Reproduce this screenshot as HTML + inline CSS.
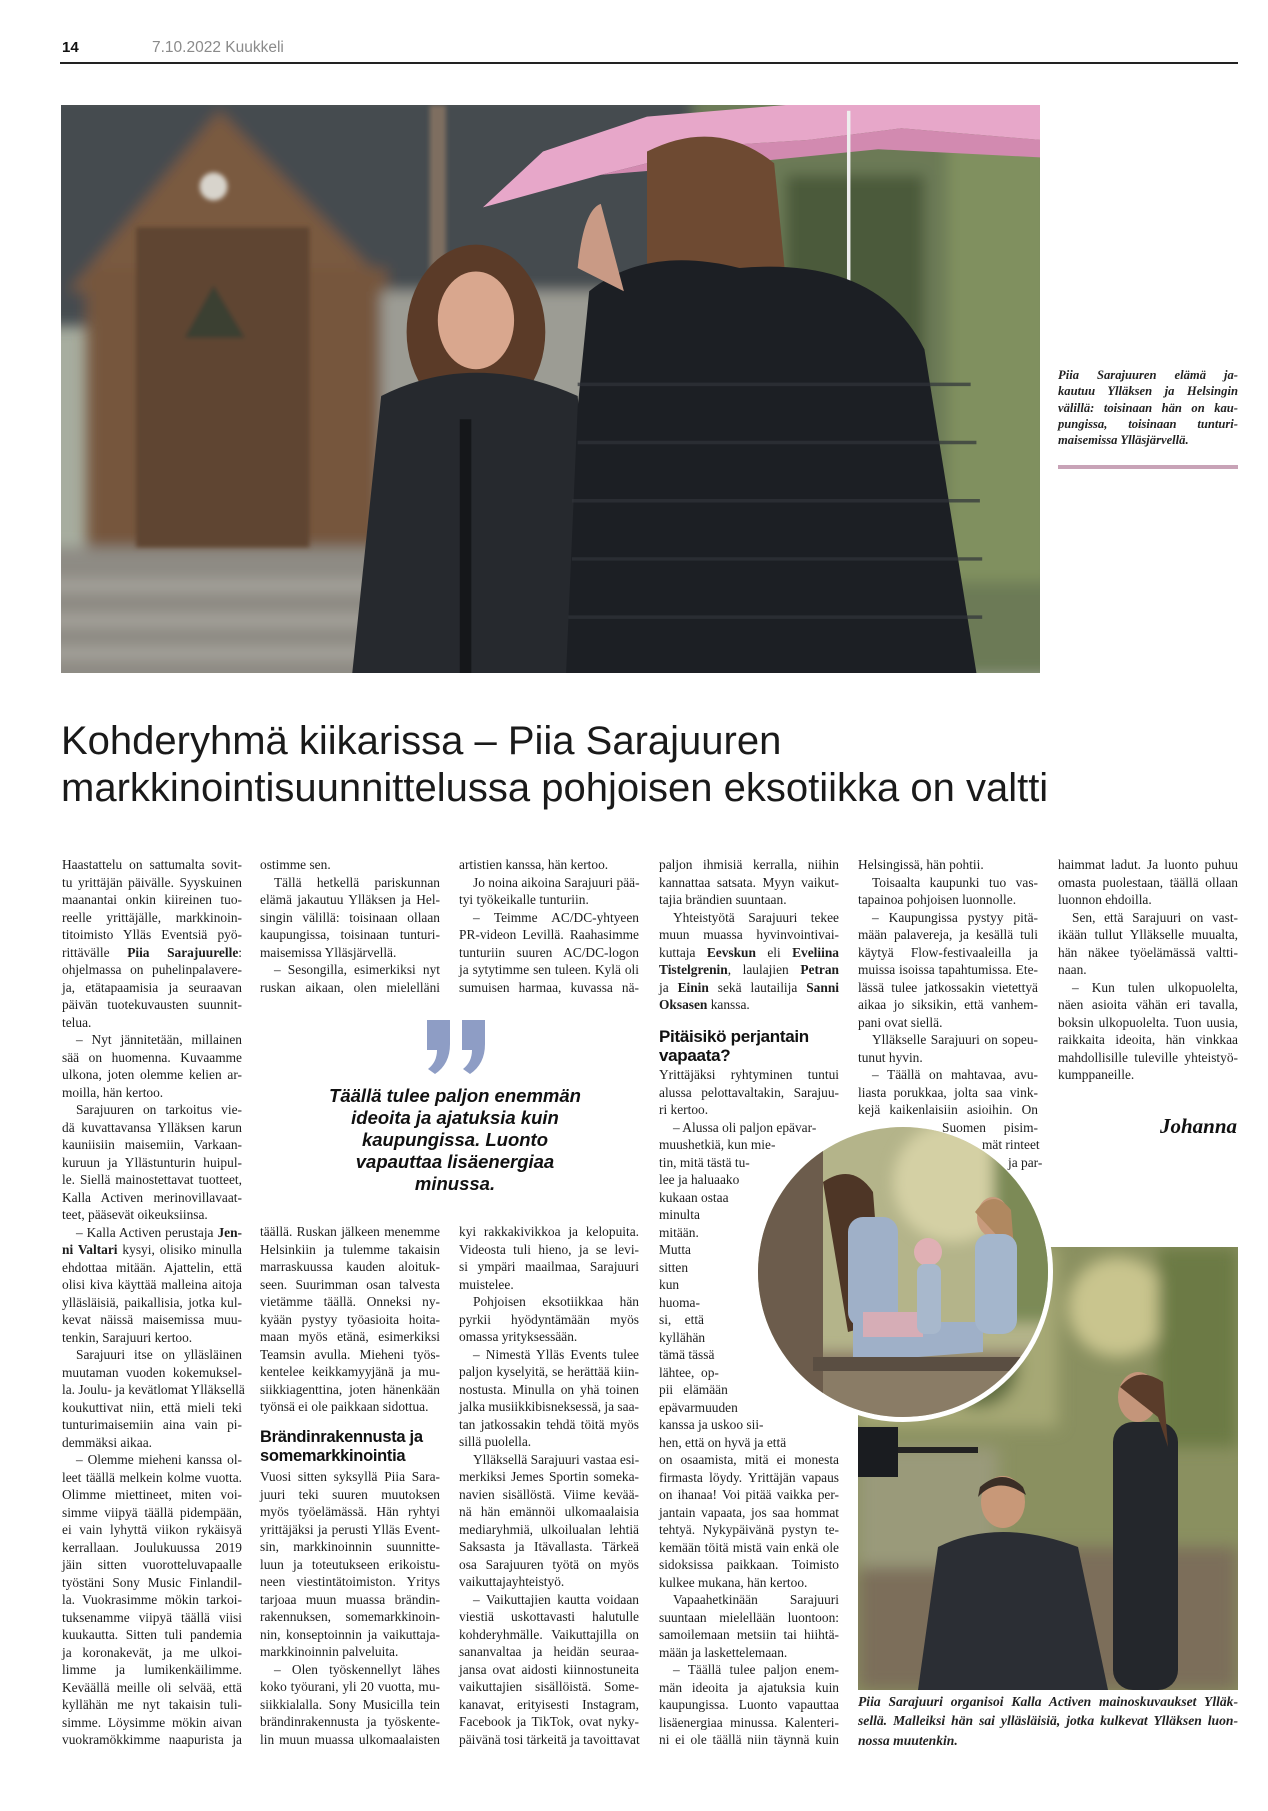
<!DOCTYPE html>
<html><head><meta charset="utf-8">
<style>
*{margin:0;padding:0;box-sizing:border-box}
body{width:1268px;height:1811px;background:#fff;position:relative;overflow:hidden;font-family:"Liberation Serif",serif;color:#1d1d1d}
.abs{position:absolute}
.col{position:absolute;width:180px;font-size:13.4px;line-height:17.5px}
.col div{text-align:justify;text-align-last:justify;white-space:nowrap;overflow:visible}
.col div.e{text-align-last:left}
.col div.i{padding-left:14px}
.col div.l{text-align-last:left}
.sh{font-family:"Liberation Sans",sans-serif;font-weight:bold;font-size:16.5px;line-height:19px;color:#111;white-space:nowrap;letter-spacing:-0.3px}
.cap{font-style:italic;font-weight:bold;color:#222}
.cap div{text-align:justify;text-align-last:justify;white-space:nowrap}
.cap div.e{text-align-last:left}
</style></head><body>

<div class="abs" style="left:62px;top:39px;font-family:'Liberation Sans',sans-serif;font-size:15px;font-weight:bold;color:#111">14</div>
<div class="abs" style="left:152px;top:39px;font-family:'Liberation Sans',sans-serif;font-size:15.5px;color:#8a8a8a">7.10.2022 Kuukkeli</div>
<div class="abs" style="left:60px;top:62px;width:1178px;height:1.5px;background:#222"></div>

<!-- main photo -->
<svg class="abs" style="left:61px;top:105px" width="979" height="568" viewBox="53 90 847 488" preserveAspectRatio="none">
<defs><filter id="b1"><feGaussianBlur stdDeviation="6"/></filter><filter id="b2"><feGaussianBlur stdDeviation="2"/></filter></defs>
<rect x="53" y="90" width="847" height="488" fill="#a7ad9f"/>
<g filter="url(#b1)">
<rect x="40" y="80" width="560" height="200" fill="#454b50"/>
<rect x="600" y="80" width="320" height="500" fill="#6c7a56"/>
<rect x="680" y="150" width="120" height="300" fill="#4c5a3a"/>
<rect x="820" y="120" width="90" height="380" fill="#80905e"/>
<polygon points="190,95 60,250 340,250" fill="#7a5a40"/>
<rect x="75" y="230" width="260" height="250" fill="#76573e"/>
<rect x="330" y="250" width="240" height="230" fill="#9c9c94"/>
<rect x="40" y="470" width="620" height="120" fill="#8e8b84"/>
<rect x="40" y="500" width="400" height="6" fill="#b3b0a8"/>
<rect x="40" y="530" width="400" height="6" fill="#b3b0a8"/>
<rect x="40" y="558" width="400" height="6" fill="#b3b0a8"/>
</g>
<g filter="url(#b2)">
<rect x="118" y="195" width="150" height="275" fill="#5f4430"/>
<polygon points="185,245 160,290 212,290" fill="#3a3f33"/>
<circle cx="185" cy="160" r="12" fill="#d8d4cc"/>
<rect x="372" y="90" width="14" height="490" fill="#7e6e60"/>
</g>
<polygon points="418,178 470,130 560,100 680,90 900,90 900,120 780,110 700,120 620,125 520,150" fill="#e7a7c9"/>
<polygon points="520,150 620,125 700,120 780,110 900,120 900,135 760,128 640,140" fill="#d28ab0"/>
<rect x="733" y="95" width="3" height="150" fill="#eee"/>
<ellipse cx="412" cy="285" rx="60" ry="75" fill="#5b3b28"/>
<ellipse cx="412" cy="275" rx="33" ry="42" fill="#d9a78e"/>
<path d="M330,340 Q410,300 500,340 L520,578 L305,578 Z" fill="#26292e"/>
<rect x="398" y="360" width="10" height="218" fill="#15171a"/>
<path d="M560,130 Q620,100 670,140 L690,340 L560,340 Z" fill="#6e4a32"/>
<path d="M510,250 Q560,210 640,230 Q760,220 800,300 L845,578 L490,578 L500,350 Z" fill="#1c1f24"/>
<path d="M500,230 Q505,180 520,175 L540,250 Z" fill="#c99a85"/>
<g stroke="#30343a" stroke-width="3" opacity=".7"><line x1="500" y1="330" x2="840" y2="330"/><line x1="500" y1="380" x2="845" y2="380"/><line x1="495" y1="430" x2="848" y2="430"/><line x1="495" y1="480" x2="850" y2="480"/><line x1="492" y1="530" x2="850" y2="530"/></g>
</svg>

<div class="abs cap" style="left:1058px;top:367px;width:180px;font-size:12.6px;line-height:16.3px">
<div>Piia Sarajuuren elämä ja-</div><div>kautuu Ylläksen ja Helsingin</div><div>välillä: toisinaan hän on kau-</div><div>pungissa, toisinaan tunturi-</div><div class="e">maisemissa Ylläsjärvellä.</div>
</div>
<div class="abs" style="left:1058px;top:465px;width:180px;height:4px;background:#c8a3b7"></div>

<div class="abs" style="left:61px;top:718px;font-family:'Liberation Sans',sans-serif;font-size:40px;line-height:47px;color:#1a1a1a;white-space:nowrap">Kohderyhmä kiikarissa – Piia Sarajuuren<br>markkinointisuunnittelussa pohjoisen eksotiikka on valtti</div>

<!-- rect photo -->
<svg class="abs" style="left:858px;top:1247px" width="380" height="443" viewBox="0 0 380 443">
<defs><filter id="b3"><feGaussianBlur stdDeviation="8"/></filter></defs>
<rect width="380" height="443" fill="#8a9060"/>
<g filter="url(#b3)">
<rect x="0" y="0" width="200" height="180" fill="#a6a874"/>
<circle cx="260" cy="60" r="50" fill="#c9c58e"/>
<circle cx="120" cy="120" r="40" fill="#5c6a3c"/>
<rect x="300" y="0" width="80" height="200" fill="#6c7a44"/>
<rect x="0" y="300" width="380" height="143" fill="#7b6e5a"/>
<rect x="0" y="200" width="140" height="120" fill="#9a9a7a"/>
</g>
<ellipse cx="145" cy="255" rx="22" ry="26" fill="#c89878"/>
<path d="M120,250 Q140,228 168,248 L165,240 Q145,220 122,240 Z" fill="#3a2e26"/>
<path d="M80,300 Q140,270 220,300 L250,443 L60,443 Z" fill="#2b2e34"/>
<rect x="0" y="180" width="40" height="50" fill="#1a1c20"/>
<rect x="40" y="200" width="80" height="6" fill="#222"/>
<rect x="255" y="175" width="65" height="268" rx="20" fill="#24272c"/>
<ellipse cx="280" cy="150" rx="20" ry="25" fill="#c4957a"/>
<path d="M262,140 Q280,118 305,135 L310,200 L300,170 Z" fill="#5a3c2a"/>
</svg>
<div class="abs cap" style="left:858px;top:1692px;width:380px;font-size:13.6px;line-height:19.3px">
<div>Piia Sarajuuri organisoi Kalla Activen mainoskuvaukset Ylläk-</div>
<div>sellä. Malleiksi hän sai ylläsläisiä, jotka kulkevat Ylläksen luon-</div>
<div class="e">nossa muutenkin.</div>
</div>

<!-- circle photo -->
<svg class="abs" style="left:753px;top:1122px" width="300" height="300" viewBox="0 0 300 300">
<defs><clipPath id="c"><circle cx="150" cy="150" r="145"/></clipPath><filter id="b4"><feGaussianBlur stdDeviation="7"/></filter></defs>
<circle cx="150" cy="150" r="150" fill="#fff"/>
<g clip-path="url(#c)">
<rect width="300" height="300" fill="#b4b48a"/>
<g filter="url(#b4)">
<circle cx="200" cy="60" r="60" fill="#d4d0a4"/>
<rect x="240" y="0" width="70" height="200" fill="#7c8a56"/>
<rect x="0" y="230" width="306" height="80" fill="#8a7c66"/>
</g>
<rect x="0" y="0" width="70" height="306" fill="#6c5c4c"/>
<path d="M70,60 Q100,40 120,70 L130,200 L95,210 Z" fill="#4e3626"/>
<rect x="95" y="95" width="50" height="110" rx="15" fill="#9fb0c8"/>
<path d="M100,200 L230,200 L230,230 L100,240 Z" fill="#9fb0c8"/>
<path d="M110,190 L170,190 L170,215 L110,215 Z" fill="#d6adb6"/>
<rect x="60" y="235" width="220" height="14" fill="#5a4e42"/>
<circle cx="175" cy="130" r="14" fill="#e0b0b4"/>
<rect x="164" y="142" width="24" height="70" rx="8" fill="#a8b8cc"/>
<ellipse cx="240" cy="95" rx="16" ry="20" fill="#c89a7c"/>
<path d="M222,90 Q240,65 258,88 L262,140 L250,120 Z" fill="#b08860"/>
<rect x="222" y="112" width="42" height="100" rx="14" fill="#a4b6cc"/>
</g>
</svg>

<!-- col1 -->
<div class="col" style="left:62px;top:856px">
<div>Haastattelu on sattumalta sovit-</div>
<div>tu yrittäjän päivälle. Syyskuinen</div>
<div>maanantai onkin kiireinen tuo-</div>
<div>reelle yrittäjälle, markkinoin-</div>
<div>titoimisto Ylläs Eventsiä pyö-</div>
<div>rittävälle <b>Piia Sarajuurelle</b>:</div>
<div>ohjelmassa on puhelinpalavere-</div>
<div>ja, etätapaamisia ja seuraavan</div>
<div>päivän tuotekuvausten suunnit-</div>
<div class="e">telua.</div>
<div class="i">– Nyt jännitetään, millainen</div>
<div>sää on huomenna. Kuvaamme</div>
<div>ulkona, joten olemme kelien ar-</div>
<div class="e">moilla, hän kertoo.</div>
<div class="i">Sarajuuren on tarkoitus vie-</div>
<div>dä kuvattavansa Ylläksen karun</div>
<div>kauniisiin maisemiin, Varkaan-</div>
<div>kuruun ja Yllästunturin huipul-</div>
<div>le. Siellä mainostettavat tuotteet,</div>
<div>Kalla Activen merinovillavaat-</div>
<div class="e">teet, pääsevät oikeuksiinsa.</div>
<div class="i">– Kalla Activen perustaja <b>Jen-</b></div>
<div><b>ni Valtari</b> kysyi, olisiko minulla</div>
<div>ehdottaa mitään. Ajattelin, että</div>
<div>olisi kiva käyttää malleina aitoja</div>
<div>ylläsläisiä, paikallisia, jotka kul-</div>
<div>kevat näissä maisemissa muu-</div>
<div class="e">tenkin, Sarajuuri kertoo.</div>
<div class="i">Sarajuuri itse on ylläsläinen</div>
<div>muutaman vuoden kokemuksel-</div>
<div>la. Joulu- ja kevätlomat Ylläksellä</div>
<div>koukuttivat niin, että mieli teki</div>
<div>tunturimaisemiin aina vain pi-</div>
<div class="e">demmäksi aikaa.</div>
<div class="i">– Olemme mieheni kanssa ol-</div>
<div>leet täällä melkein kolme vuotta.</div>
<div>Olimme miettineet, miten voi-</div>
<div>simme viipyä täällä pidempään,</div>
<div>ei vain lyhyttä viikon rykäisyä</div>
<div>kerrallaan. Joulukuussa 2019</div>
<div>jäin sitten vuorotteluvapaalle</div>
<div>työstäni Sony Music Finlandil-</div>
<div>la. Vuokrasimme mökin tarkoi-</div>
<div>tuksenamme viipyä täällä viisi</div>
<div>kuukautta. Sitten tuli pandemia</div>
<div>ja koronakevät, ja me ulkoi-</div>
<div>limme ja lumikenkäilimme.</div>
<div>Keväällä meille oli selvää, että</div>
<div>kyllähän me nyt takaisin tuli-</div>
<div>simme. Löysimme mökin aivan</div>
<div>vuokramökkimme naapurista ja</div>
</div>

<!-- col2 -->
<div class="col" style="left:260px;top:856px">
<div class="e">ostimme sen.</div>
<div class="i">Tällä hetkellä pariskunnan</div>
<div>elämä jakautuu Ylläksen ja Hel-</div>
<div>singin välillä: toisinaan ollaan</div>
<div>kaupungissa, toisinaan tunturi-</div>
<div class="e">maisemissa Ylläsjärvellä.</div>
<div class="i">– Sesongilla, esimerkiksi nyt</div>
<div>ruskan aikaan, olen mielelläni</div>
</div>
<div class="col" style="left:260px;top:1223px">
<div>täällä. Ruskan jälkeen menemme</div>
<div>Helsinkiin ja tulemme takaisin</div>
<div>marraskuussa kauden aloituk-</div>
<div>seen. Suurimman osan talvesta</div>
<div>vietämme täällä. Onneksi ny-</div>
<div>kyään pystyy työasioita hoita-</div>
<div>maan myös etänä, esimerkiksi</div>
<div>Teamsin avulla. Mieheni työs-</div>
<div>kentelee keikkamyyjänä ja mu-</div>
<div>siikkiagenttina, joten hänenkään</div>
<div class="e">työnsä ei ole paikkaan sidottua.</div>
</div>
<div class="abs sh" style="left:260px;top:1428px">Brändinrakennusta ja<br>somemarkkinointia</div>
<div class="col" style="left:260px;top:1468px">
<div>Vuosi sitten syksyllä Piia Sara-</div>
<div>juuri teki suuren muutoksen</div>
<div>myös työelämässä. Hän ryhtyi</div>
<div>yrittäjäksi ja perusti Ylläs Event-</div>
<div>sin, markkinoinnin suunnitte-</div>
<div>luun ja toteutukseen erikoistu-</div>
<div>neen viestintätoimiston. Yritys</div>
<div>tarjoaa muun muassa brändin-</div>
<div>rakennuksen, somemarkkinoin-</div>
<div>nin, konseptoinnin ja vaikuttaja-</div>
<div class="e">markkinoinnin palveluita.</div>
<div class="i">– Olen työskennellyt lähes</div>
<div>koko työurani, yli 20 vuotta, mu-</div>
<div>siikkialalla. Sony Musicilla tein</div>
<div>brändinrakennusta ja työskente-</div>
<div>lin muun muassa ulkomaalaisten</div>
</div>

<!-- pull quote -->
<svg class="abs" style="left:426px;top:1020px" width="62" height="54" viewBox="0 0 62 54">
<path d="M1,0 H24 V24 Q24,44 9,54 L2,49 Q11,42 11,30 H1 Z" fill="#8e9dc5"/>
<path d="M36,0 H59 V24 Q59,44 44,54 L37,49 Q46,42 46,30 H36 Z" fill="#8e9dc5"/>
</svg>
<div class="abs" style="left:300px;top:1085px;width:310px;text-align:center;font-family:'Liberation Sans',sans-serif;font-style:italic;font-weight:bold;font-size:18.5px;line-height:22px;color:#111">Täällä tulee paljon enemmän<br>ideoita ja ajatuksia kuin<br>kaupungissa. Luonto<br>vapauttaa lisäenergiaa<br>minussa.</div>

<!-- col3 -->
<div class="col" style="left:459px;top:856px">
<div class="e">artistien kanssa, hän kertoo.</div>
<div class="i">Jo noina aikoina Sarajuuri pää-</div>
<div class="e">tyi työkeikalle tunturiin.</div>
<div class="i">– Teimme AC/DC-yhtyeen</div>
<div>PR-videon Levillä. Raahasimme</div>
<div>tunturiin suuren AC/DC-logon</div>
<div>ja sytytimme sen tuleen. Kylä oli</div>
<div>sumuisen harmaa, kuvassa nä-</div>
</div>
<div class="col" style="left:459px;top:1223px">
<div>kyi rakkakivikkoa ja kelopuita.</div>
<div>Videosta tuli hieno, ja se levi-</div>
<div>si ympäri maailmaa, Sarajuuri</div>
<div class="e">muistelee.</div>
<div class="i">Pohjoisen eksotiikkaa hän</div>
<div>pyrkii hyödyntämään myös</div>
<div class="e">omassa yrityksessään.</div>
<div class="i">– Nimestä Ylläs Events tulee</div>
<div>paljon kyselyitä, se herättää kiin-</div>
<div>nostusta. Minulla on yhä toinen</div>
<div>jalka musiikkibisneksessä, ja saa-</div>
<div>tan jatkossakin tehdä töitä myös</div>
<div class="e">sillä puolella.</div>
<div class="i">Ylläksellä Sarajuuri vastaa esi-</div>
<div>merkiksi Jemes Sportin someka-</div>
<div>navien sisällöstä. Viime kevää-</div>
<div>nä hän emännöi ulkomaalaisia</div>
<div>mediaryhmiä, ulkoilualan lehtiä</div>
<div>Saksasta ja Itävallasta. Tärkeä</div>
<div>osa Sarajuuren työtä on myös</div>
<div class="e">vaikuttajayhteistyö.</div>
<div class="i">– Vaikuttajien kautta voidaan</div>
<div>viestiä uskottavasti halutulle</div>
<div>kohderyhmälle. Vaikuttajilla on</div>
<div>sananvaltaa ja heidän seuraa-</div>
<div>jansa ovat aidosti kiinnostuneita</div>
<div>vaikuttajien sisällöistä. Some-</div>
<div>kanavat, erityisesti Instagram,</div>
<div>Facebook ja TikTok, ovat nyky-</div>
<div>päivänä tosi tärkeitä ja tavoittavat</div>
</div>

<!-- col4 -->
<div class="col" style="left:659px;top:856px">
<div>paljon ihmisiä kerralla, niihin</div>
<div>kannattaa satsata. Myyn vaikut-</div>
<div class="e">tajia brändien suuntaan.</div>
<div class="i">Yhteistyötä Sarajuuri tekee</div>
<div>muun muassa hyvinvointivai-</div>
<div>kuttaja <b>Eevskun</b> eli <b>Eveliina</b></div>
<div><b>Tistelgrenin</b>, laulajien <b>Petran</b></div>
<div>ja <b>Einin</b> sekä lautailija <b>Sanni</b></div>
<div class="e"><b>Oksasen</b> kanssa.</div>
</div>
<div class="abs sh" style="left:659px;top:1028px;font-size:17px;line-height:18.5px">Pitäisikö perjantain<br>vapaata?</div>
<div class="col" style="left:659px;top:1066px">
<div>Yrittäjäksi ryhtyminen tuntui</div>
<div>alussa pelottavaltakin, Sarajuu-</div>
<div class="e">ri kertoo.</div>
<div class="i l">– Alussa oli paljon epävar-</div>
<div class="l">muushetkiä, kun mie-</div>
<div class="l">tin, mitä tästä tu-</div>
<div class="l">lee ja haluaako</div>
<div class="l">kukaan ostaa</div>
<div class="l">minulta</div>
<div class="l">mitään.</div>
<div class="l">Mutta</div>
<div class="l">sitten</div>
<div class="l">kun</div>
<div class="l">huoma-</div>
<div class="l">si,&nbsp;&nbsp;&nbsp;&nbsp;että</div>
<div class="l">kyllähän</div>
<div class="l">tämä tässä</div>
<div class="l">lähtee,&nbsp;&nbsp;op-</div>
<div class="l">pii&nbsp;&nbsp;&nbsp;elämään</div>
<div class="l">epävarmuuden</div>
<div class="l">kanssa ja uskoo sii-</div>
<div class="l">hen, että on hyvä ja että</div>
<div>on osaamista, mitä ei monesta</div>
<div>firmasta löydy. Yrittäjän vapaus</div>
<div>on ihanaa! Voi pitää vaikka per-</div>
<div>jantain vapaata, jos saa hommat</div>
<div>tehtyä. Nykypäivänä pystyn te-</div>
<div>kemään töitä mistä vain enkä ole</div>
<div>sidoksissa paikkaan. Toimisto</div>
<div class="e">kulkee mukana, hän kertoo.</div>
<div class="i">Vapaahetkinään Sarajuuri</div>
<div>suuntaan mielellään luontoon:</div>
<div>samoilemaan metsiin tai hiihtä-</div>
<div class="e">mään ja laskettelemaan.</div>
<div class="i">– Täällä tulee paljon enem-</div>
<div>män ideoita ja ajatuksia kuin</div>
<div>kaupungissa. Luonto vapauttaa</div>
<div>lisäenergiaa minussa. Kalenteri-</div>
<div>ni ei ole täällä niin täynnä kuin</div>
</div>

<!-- col5 -->
<div class="col" style="left:858px;top:856px">
<div class="e">Helsingissä, hän pohtii.</div>
<div class="i">Toisaalta kaupunki tuo vas-</div>
<div class="e">tapainoa pohjoisen luonnolle.</div>
<div class="i">– Kaupungissa pystyy pitä-</div>
<div>mään palavereja, ja kesällä tuli</div>
<div>käytyä Flow-festivaaleilla ja</div>
<div>muissa isoissa tapahtumissa. Ete-</div>
<div>lässä tulee jatkossakin vietettyä</div>
<div>aikaa jo siksikin, että vanhem-</div>
<div class="e">pani ovat siellä.</div>
<div class="i">Ylläkselle Sarajuuri on sopeu-</div>
<div class="e">tunut hyvin.</div>
<div class="i">– Täällä on mahtavaa, avu-</div>
<div>liasta porukkaa, jolta saa vink-</div>
<div>kejä kaikenlaisiin asioihin. On</div>
<div style="padding-left:84px">Suomen pisim-</div>
<div style="padding-left:124px;text-align-last:right">mät rinteet</div>
<div style="padding-left:150px;text-align-last:right">ja par-</div>
</div>

<!-- col6 -->
<div class="col" style="left:1058px;top:856px">
<div>haimmat ladut. Ja luonto puhuu</div>
<div>omasta puolestaan, täällä ollaan</div>
<div class="e">luonnon ehdoilla.</div>
<div class="i">Sen, että Sarajuuri on vast-</div>
<div>ikään tullut Ylläkselle muualta,</div>
<div>hän näkee työelämässä valtti-</div>
<div class="e">naan.</div>
<div class="i">– Kun tulen ulkopuolelta,</div>
<div>näen asioita vähän eri tavalla,</div>
<div>boksin ulkopuolelta. Tuon uusia,</div>
<div>raikkaita ideoita, hän vinkkaa</div>
<div>mahdollisille tuleville yhteistyö-</div>
<div class="e">kumppaneille.</div>
</div>
<div class="abs" style="left:1160px;top:1114px;font-family:'Liberation Serif',serif;font-style:italic;font-weight:bold;font-size:21px;color:#111">Johanna</div>

</body></html>
